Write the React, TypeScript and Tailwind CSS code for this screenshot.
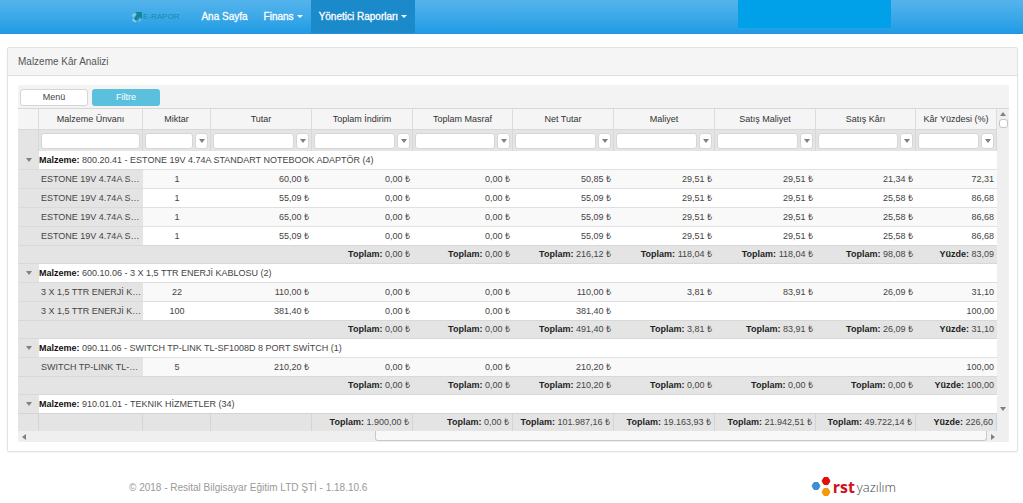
import { Fragment } from 'react';

type Row = { name: string; cells: string[] };
type Group = { title: string; rows: Row[]; totals: string[] };

const columns = [
    'Malzeme Ünvanı', 'Miktar', 'Tutar', 'Toplam İndirim', 'Toplam Masraf',
    'Net Tutar', 'Maliyet', 'Satış Maliyet', 'Satış Kârı', 'Kâr Yüzdesi (%)',
];

const colWidths = [
    'w-[21px]', 'w-[104px]', 'w-[68px]', 'w-[101px]', 'w-[101px]', 'w-[100px]',
    'w-[101px]', 'w-[101px]', 'w-[101px]', 'w-[100px]', 'w-[81px]',
];

const estone = 'ESTONE 19V 4.74A S…';
const enerji = '3 X 1,5 TTR ENERJİ K…';

const groups: Group[] = [
    {
        title: '800.20.41 - ESTONE 19V 4.74A STANDART NOTEBOOK ADAPTÖR (4)',
        rows: [
            { name: estone, cells: ['1', '60,00 ₺', '0,00 ₺', '0,00 ₺', '50,85 ₺', '29,51 ₺', '29,51 ₺', '21,34 ₺', '72,31'] },
            { name: estone, cells: ['1', '55,09 ₺', '0,00 ₺', '0,00 ₺', '55,09 ₺', '29,51 ₺', '29,51 ₺', '25,58 ₺', '86,68'] },
            { name: estone, cells: ['1', '65,00 ₺', '0,00 ₺', '0,00 ₺', '55,09 ₺', '29,51 ₺', '29,51 ₺', '25,58 ₺', '86,68'] },
            { name: estone, cells: ['1', '55,09 ₺', '0,00 ₺', '0,00 ₺', '55,09 ₺', '29,51 ₺', '29,51 ₺', '25,58 ₺', '86,68'] },
        ],
        totals: ['0,00 ₺', '0,00 ₺', '216,12 ₺', '118,04 ₺', '118,04 ₺', '98,08 ₺', '83,09'],
    },
    {
        title: '600.10.06 - 3 X 1,5 TTR ENERJİ KABLOSU (2)',
        rows: [
            { name: enerji, cells: ['22', '110,00 ₺', '0,00 ₺', '0,00 ₺', '110,00 ₺', '3,81 ₺', '83,91 ₺', '26,09 ₺', '31,10'] },
            { name: enerji, cells: ['100', '381,40 ₺', '0,00 ₺', '0,00 ₺', '381,40 ₺', '', '', '', '100,00'] },
        ],
        totals: ['0,00 ₺', '0,00 ₺', '491,40 ₺', '3,81 ₺', '83,91 ₺', '26,09 ₺', '31,10'],
    },
    {
        title: '090.11.06 - SWITCH TP-LINK TL-SF1008D 8 PORT SWİTCH (1)',
        rows: [
            { name: 'SWITCH TP-LINK TL-…', cells: ['5', '210,20 ₺', '0,00 ₺', '0,00 ₺', '210,20 ₺', '', '', '', '100,00'] },
        ],
        totals: ['0,00 ₺', '0,00 ₺', '210,20 ₺', '0,00 ₺', '0,00 ₺', '0,00 ₺', '100,00'],
    },
    { title: '910.01.01 - TEKNIK HİZMETLER (34)', rows: [], totals: [] },
];

const grandTotals = ['1.900,00 ₺', '0,00 ₺', '101.987,16 ₺', '19.163,93 ₺', '21.942,51 ₺', '49.722,14 ₺', '226,60'];

function Arrow({ dir }: { dir: 'up' | 'down' | 'left' | 'right' }) {
    const paths = {
        up: 'M0 5L3 1L6 5Z',
        down: 'M0 1H6L3 5Z',
        left: 'M5 0V6L1 3Z',
        right: 'M1 0V6L5 3Z',
    };
    return (
        <svg viewBox="0 0 6 6" className="block size-[6px] fill-[#808080]" aria-hidden="true">
            <path d={paths[dir]} />
        </svg>
    );
}

function Total({ label, value }: { label: string; value: string }) {
    return <><b className="text-[#222]">{label}:</b> {value}</>;
}

function Caret() {
    return (
        <svg viewBox="0 0 6 3" className="h-[3px] w-[6px] fill-white" aria-hidden="true">
            <path d="M0 0H6L3 3Z" />
        </svg>
    );
}

function Navbar() {
    const item = 'flex items-center gap-[3px] px-[8px] text-[10px] text-white [-webkit-text-stroke:0.3px_white]';
    return (
        <nav className="flex h-[34px] items-stretch border-b border-[#2a94dc] bg-linear-to-b from-[#54b4eb] to-[#1d9ce5]">
            <a href="#" className="ml-[131px] mr-[14px] flex items-center">
                <svg viewBox="0 0 12 12" className="size-[12px]" aria-hidden="true">
                    <path d="M1 4L4 1.5L5 4L2 7Z" fill="#8fc6e6" />
                    <path d="M1 9L3 7L6 10L4 11.5Z" fill="#9ccde8" />
                    <path d="M4 1H11V8L9 6L5 10L3 8L6 3Z" fill="#0f8797" />
                    <path d="M9 8H11L9 11L7 10Z" fill="#75b9dc" />
                </svg>
                <span className="text-[8px] text-[#168ba8]">E-RAPOR</span>
            </a>
            <a href="#" className={item}>Ana Sayfa</a>
            <a href="#" className={item}>Finans <Caret /></a>
            <a href="#" className={`${item} bg-[#1b8acb]`}>Yönetici Raporları <Caret /></a>
            <div className="ml-auto mr-[132px] h-[28px] w-[153px] bg-[#00a1e9]" />
        </nav>
    );
}

function Grid() {
    return (
        <table className="w-full table-fixed border-separate border-spacing-0 text-[9px] leading-[18px] text-[#444]">
            <colgroup>
                {colWidths.map((w, i) => <col key={i} className={w} />)}
            </colgroup>
            <thead>
                <tr className="h-[20px] bg-[#f5f5f5] text-[#333]">
                    <td className="border-r border-[#dcdcdc] p-0" />
                    {columns.map((c) => (
                        <th key={c} className="whitespace-nowrap border-r border-[#dcdcdc] p-0 text-center font-normal">{c}</th>
                    ))}
                </tr>
                <tr className="h-[22px] bg-[#e4e4e4]">
                    <td className="border-r border-t border-[#d8d8d8] p-0" />
                    {columns.map((c, i) => (
                        <td key={c} className="border-r border-t border-[#d8d8d8] px-[2px] py-0">
                            <div className="flex gap-[2px]">
                                <input type="text" aria-label={`${c} filtresi`} className="h-[16px] min-w-0 flex-1 rounded-[3px] border border-[#d6d6d6] bg-white px-1" />
                                {i > 0 && (
                                    <button type="button" aria-label={`${c} filtre seçenekleri`} className="flex h-[16px] w-[13px] items-center justify-center rounded-[3px] border border-[#d6d6d6] bg-white">
                                        <Arrow dir="down" />
                                    </button>
                                )}
                            </div>
                        </td>
                    ))}
                </tr>
            </thead>
            <tbody>
                {groups.map((g) => (
                    <Fragment key={g.title}>
                        <tr className="h-[18px]">
                            <td className="bg-[#e4e4e4] p-0">
                                <button type="button" aria-label="Grubu daralt" className="ml-[8px] block"><Arrow dir="down" /></button>
                            </td>
                            <td colSpan={10} className="bg-white p-0">
                                <b className="text-[#111]">Malzeme:</b> {g.title}
                            </td>
                        </tr>
                        {g.rows.map((r, i) => (
                            <tr key={i} className={`h-[19px] ${i % 2 ? 'bg-white' : 'bg-[#f9f9f9]'}`}>
                                <td className="border-t border-[#dadada] bg-[#e4e4e4] p-0" />
                                <td className="whitespace-nowrap border-t border-[#dadada] bg-[#e4e4e4] py-0 pl-[2px] pr-0">{r.name}</td>
                                {r.cells.map((v, j) => (
                                    <td key={j} className={`border-t border-[#e0e0e0] py-0 ${j === 0 ? 'text-center' : 'pr-[3px] text-right'}`}>{v}</td>
                                ))}
                            </tr>
                        ))}
                        {g.totals.length > 0 && (
                            <tr className="h-[19px] bg-[#e4e4e4]">
                                <td colSpan={4} className="border-y border-[#d8d8d8] p-0" />
                                {g.totals.map((v, j) => (
                                    <td key={j} className="whitespace-nowrap border-y border-[#d8d8d8] py-0 pl-0 pr-[3px] text-right leading-[17px]">
                                        <Total label={j === 6 ? 'Yüzde' : 'Toplam'} value={v} />
                                    </td>
                                ))}
                            </tr>
                        )}
                    </Fragment>
                ))}
            </tbody>
            <tfoot>
                <tr className="h-[18px] bg-[#e4e4e4] leading-[17px]">
                    {[0, 1, 2, 3].map((j) => (
                        <td key={j} className="border-r border-t border-[#d4d4d4] p-0" />
                    ))}
                    {grandTotals.map((v, j) => (
                        <td key={j} className="whitespace-nowrap border-r border-t border-[#d4d4d4] py-0 pl-0 pr-[3px] text-right">
                            <Total label={j === 6 ? 'Yüzde' : 'Toplam'} value={v} />
                        </td>
                    ))}
                </tr>
            </tfoot>
        </table>
    );
}

function Hexagon({ cx, cy, fill }: { cx: number; cy: number; fill: string }) {
    return <path transform={`translate(${cx} ${cy})`} d="M-4 0L-2 -3.5H2L4 0L2 3.5H-2Z" fill={fill} stroke={fill} strokeLinejoin="round" />;
}

export default function App() {
    return (
        <div className="bg-white font-['Liberation_Sans',Arial,sans-serif]">
            <Navbar />

            <main className="ml-[7px] mr-[5px] mt-[13px] rounded-xs border border-[#e2e2e2] shadow-xs">
                <h1 className="border-b border-[#dedede] bg-[#f5f5f5] px-[10px] text-[10px] leading-[27px] text-[#555]">Malzeme Kâr Analizi</h1>

                <div className="mb-[9px] ml-[10px] mr-[8px] mt-[9px] overflow-hidden rounded-xs bg-[#f3f3f3]">
                    <div className="flex gap-[4px] border-b border-[#d8d8d8] px-[2px] pb-[2px] pt-[4px] text-[9px]">
                        <button type="button" className="h-[17px] w-[68px] rounded-[3px] border border-[#d6d6d6] bg-white text-[#444]">Menü</button>
                        <button type="button" className="h-[17px] w-[68px] rounded-[3px] bg-[#5bc0de] text-white">Filtre</button>
                    </div>

                    <div className="flex">
                        <div className="min-w-0 flex-1">
                            <Grid />
                        </div>
                        <div className="flex w-[12px] flex-col items-center justify-between bg-[#efefef] pb-[19px] pt-[2px]">
                            <div className="flex flex-col items-center gap-[2px]">
                                <Arrow dir="up" />
                                <div className="h-[9px] w-[9px] rounded-[3px] border border-[#c4c4c4] bg-white" />
                            </div>
                            <Arrow dir="down" />
                        </div>
                    </div>

                    <div className="flex h-[11px] items-center gap-[3px] bg-[#efefef] pl-[3px] pr-[13px]">
                        <Arrow dir="left" />
                        <div className="flex h-full flex-1 justify-end">
                            <div className="h-[10px] w-[64%] rounded-b-[3px] border border-t-0 border-[#c8c8c8] bg-[#f8f8f8]" />
                        </div>
                        <Arrow dir="right" />
                    </div>
                </div>
            </main>

            <footer className="ml-[129px] mr-[127px] mt-[20px] flex h-[30px] items-center justify-between">
                <p className="text-[10px] text-[#999]">© 2018 - Resital Bilgisayar Eğitim LTD ŞTİ - 1.18.10.6</p>
                <a href="#" className="flex items-center font-['Open_Sans',sans-serif]">
                    <svg viewBox="0 0 22 22" className="h-[22px] w-[22px]" aria-hidden="true">
                        <Hexagon cx={5} cy={10} fill="#3d8fd1" />
                        <Hexagon cx={15} cy={5} fill="#e01010" />
                        <Hexagon cx={15} cy={16} fill="#f59a0c" />
                    </svg>
                    <span className="mr-[2px] text-[16px] font-bold leading-[22px] text-[#d0101c]">rst</span>
                    <span className="text-[13px] font-light leading-[22px] text-[#444]">yazılım</span>
                </a>
            </footer>
        </div>
    );
}
